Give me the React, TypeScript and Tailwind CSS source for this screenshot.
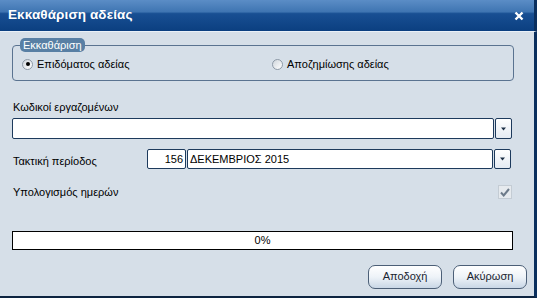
import { ReactNode } from 'react'

const font = 'font-["Liberation_Sans",Arial,sans-serif]'

function DropButton() {
	return (
		<div className="w-[17px] h-full ml-px flex items-center justify-center rounded-[2px] border border-[#1d3a5c] bg-gradient-to-b from-white to-[#e4ebf3]">
			<svg width="7" height="4" viewBox="0 0 7 4">
				<path d="M1 0.5h5L3.5 3.5z" fill="#1d2f45" />
			</svg>
		</div>
	)
}

function Field({ className, children }: { className?: string, children?: ReactNode }) {
	return (
		<div className={`h-full bg-white border border-[#1d3a5c] rounded-[2px] flex items-center text-[11px] text-black ${className ?? ''}`}>
			{children}
		</div>
	)
}

function Radio({ checked, label }: { checked?: boolean, label: string }) {
	return (
		<div className="flex items-center gap-[4px]">
			<span className="w-[11px] h-[11px] rounded-full border border-[#8d99a6] bg-gradient-to-br from-[#d0d6dc] to-white flex items-center justify-center">
				{checked && <span className="w-[4px] h-[4px] rounded-full bg-black" />}
			</span>
			<span className="text-[11px] text-black">{label}</span>
		</div>
	)
}

function DialogButton({ children }: { children: ReactNode }) {
	return (
		<button className="w-[74px] h-[24px] rounded-[7px] border border-[#4c5f77] bg-gradient-to-b from-white via-[#eef3f8] to-[#c9d7e6] text-[11px] text-[#1a2430]">
			{children}
		</button>
	)
}

export default function App() {
	return (
		<div className={`w-[537px] h-[298px] flex flex-col overflow-hidden ${font}`}>
			<div className="h-[31px] shrink-0 flex items-center justify-between pl-[8px] pr-[10px] bg-[linear-gradient(to_bottom,#5b8dc6_0%,#3f75b2_38%,#184f93_44%,#0b3f80_100%)] border-r-[3px] border-[#0a2f5e]">
				<span className="text-white font-bold text-[13.5px] tracking-[0.1px]">Εκκαθάριση αδείας</span>
				<svg width="10" height="10" viewBox="0 0 10 10">
					<path d="M1.5 1.5l7 7M8.5 1.5l-7 7" stroke="white" strokeWidth="2.4" />
				</svg>
			</div>

			<div className="flex-1 flex flex-col bg-[#d6dfe8] border-t border-[#eaf1f8] border-r-[3px] border-r-[#0a2f5e] border-b-[2px] border-b-[#0d2440] pl-[12px]">
				<fieldset className="mt-[6px] w-[502px] h-[43px] border border-[#5a7390] rounded-[4px] pl-[9px] pr-0 pb-0 m-0 flex items-center">
					<legend className="ml-[-2px] px-[3px] rounded-[5px] bg-[#587fa4] text-white text-[11px] leading-[14px]">Εκκαθάριση</legend>
					<div className="flex items-center w-full mt-[4px]">
						<div className="w-[250px]">
							<Radio checked label="Επιδόματος αδείας" />
						</div>
						<Radio label="Αποζημίωσης αδείας" />
					</div>
				</fieldset>

				<div className="mt-[20px] pl-px text-[11px] text-black leading-[13px]">Κωδικοί εργαζομένων</div>
				<div className="mt-[4px] h-[21px] w-[500px] flex">
					<Field className="flex-1" />
					<DropButton />
				</div>

				<div className="mt-[10px] h-[20px] w-[499px] flex items-center">
					<span className="w-[135px] pl-px text-[11px] text-black pt-[4px]">Τακτική περίοδος</span>
					<Field className="w-[39px] justify-end pr-[2px]">156</Field>
					<Field className="flex-1 pl-[2px] ml-px">ΔΕΚΕΜΒΡΙΟΣ 2015</Field>
					<DropButton />
				</div>

				<div className="mt-[15px] w-[499px] flex items-center justify-between">
					<span className="pl-px text-[11px] text-black">Υπολογισμός ημερών</span>
					<span className="w-[14px] h-[14px] mr-[-1px] bg-[#e6eaee] border border-[#c4ccd4] flex items-center justify-center">
						<svg width="10" height="9" viewBox="0 0 10 9">
							<path d="M1 4.5l2.7 3L9 1" stroke="#6d7b8a" strokeWidth="2" fill="none" />
						</svg>
					</span>
				</div>

				<div className="mt-[30px] w-[501px] h-[19px] bg-white border border-black flex items-center justify-center text-[11px] text-black">
					0%
				</div>

				<div className="mt-[15px] flex justify-end gap-[11px] pr-[7px]">
					<DialogButton>Αποδοχή</DialogButton>
					<DialogButton>Ακύρωση</DialogButton>
				</div>
			</div>
		</div>
	)
}
